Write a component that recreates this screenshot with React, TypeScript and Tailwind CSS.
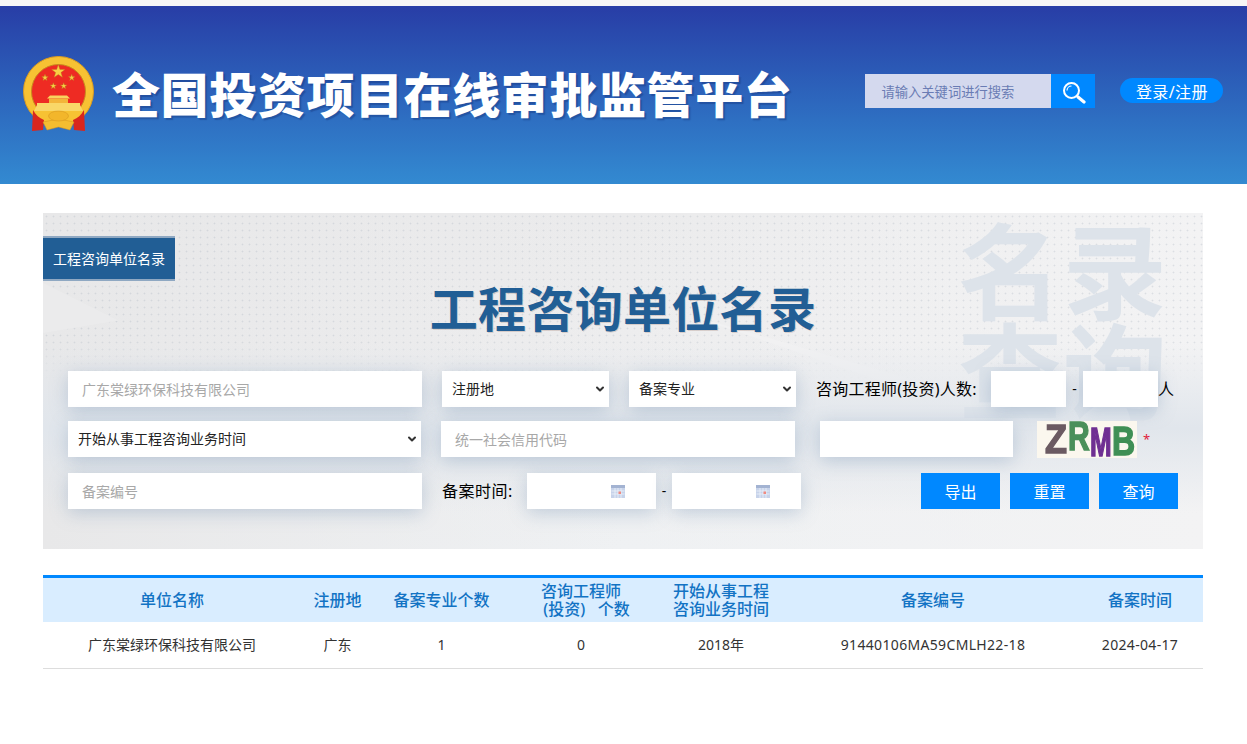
import React from 'react';
import { ChevronDown } from 'lucide-react';

const FONT = "font-['Noto_Sans','Noto_Sans_CJK_SC',sans-serif]";

const columns = [
  { label: <>单位名称</>, value: '广东棠绿环保科技有限公司', cell: '' },
  { label: <>注册地</>, value: '广东', cell: '' },
  { label: <>备案专业个数</>, value: '1', cell: '' },
  { label: <>咨询工程师<br /><span className="ml-[11px]">(投资) &nbsp;&nbsp;个数</span></>, value: '0', cell: '' },
  { label: <>开始从事工程<br />咨询业务时间</>, value: '2018年', cell: '' },
  { label: <>备案编号</>, value: '91440106MA59CMLH22-18', cell: 'tracking-[0.33px]' },
  { label: <>备案时间</>, value: '2024-04-17', cell: 'tracking-[0.33px]' },
];

const GRID = 'grid grid-cols-[258px_73px_135px_144px_136px_288px_126px]';
const BOX = 'h-9 bg-white shadow-[0_4px_18px_rgba(110,140,175,0.35)]';

function star(cx: number, cy: number, r: number) {
  const pts: string[] = [];
  for (let i = 0; i < 10; i++) {
    const rad = i % 2 === 0 ? r : r * 0.4;
    const a = -Math.PI / 2 + (i * Math.PI) / 5;
    pts.push(`${cx + rad * Math.cos(a)},${cy + rad * Math.sin(a)}`);
  }
  return <polygon points={pts.join(' ')} fill="#f9cf45" stroke="#b9801c" strokeWidth="0.4" />;
}

function Emblem() {
  return (
    <svg width="74" height="76" viewBox="0 0 74 76" className="shrink-0">
      <circle cx="36.5" cy="35.5" r="35" fill="#f7c233" stroke="#dd9c20" strokeWidth="1" />
      <circle cx="36.5" cy="35.5" r="27" fill="#ee2b23" stroke="#c98a1e" strokeWidth="1" />
      {star(36.3, 15.7, 7)}
      {star(23, 21.7, 3.4)}
      {star(49.7, 21.7, 3.4)}
      {star(31.3, 30, 3.3)}
      {star(41.7, 30, 3.3)}
      {/* gate */}
      <path d="M28 39.5h17l3 3H25z" fill="#f9d45e" />
      <rect x="27" y="42.5" width="19" height="4.500" fill="#f3b53a" />
      <path d="M15 47h43v2l3 6H12l3-6z" fill="#f9d768" />
      <path d="M12 55h49c-5 6-14 9.500-24.500 9.500S17 61 12 55z" fill="#f7c233" />
      {/* lower swag and cog */}
      <path d="M11 54c3 5 6 8 11 10l-1 10-11 1z" fill="#d9261d" />
      <path d="M62 54c-3 5-6 8-11 10l1 10 11 1z" fill="#d9261d" />
      <path d="M21 66l15.500-3 15.500 3-4 8-11.500-3-11.500 3z" fill="#f4bd30" stroke="#d3921f" strokeWidth="0.5" />
      <ellipse cx="36.500" cy="60" rx="10" ry="5" fill="#f2b62b" stroke="#d3921f" strokeWidth="0.5" />
    </svg>
  );
}

function SearchGlyph() {
  return (
    <svg width="26" height="26" viewBox="0 0 26 26" fill="none" stroke="white">
      <circle cx="11.500" cy="12.500" r="7.500" strokeWidth="2" />
      <path d="M7 12.500a4.500 4.500 0 0 1 4.500-4.500" strokeWidth="1.200" />
      <path d="M18 19l6 5" strokeWidth="3.200" strokeLinecap="round" />
    </svg>
  );
}

function CalendarGlyph() {
  return (
    <svg width="14" height="13" viewBox="0 0 14 13">
      <rect x="0" y="0" width="14" height="13" fill="#c7d3ea" />
      <rect x="0" y="0" width="14" height="3" fill="#a3b3d2" />
      <path d="M0.500 6h13M0.500 9h13M4 3v10M7 3v10M10 3v10" stroke="#eef2fa" strokeWidth="0.800" />
      <rect x="7.500" y="6.500" width="2.500" height="2.500" fill="#f08a80" />
    </svg>
  );
}

function TextBox({ width, placeholder }: { width: string; placeholder?: string }) {
  return (
    <div className={`${BOX} ${width} flex items-center px-3.5 pt-[2px] text-sm text-[#a8a8a8]`}>{placeholder}</div>
  );
}

function SelectBox({ width, label }: { width: string; label: string }) {
  return (
    <div className={`${BOX} ${width} flex items-center justify-between pl-2.5 pr-[3px] text-sm text-[#222]`}>
      <span>{label}</span>
      <ChevronDown size={12} strokeWidth={4} className="text-[#333]" />
    </div>
  );
}

function DateBox() {
  return (
    <div className={`${BOX} flex w-[129px] items-center justify-end pr-[31px]`}>
      <CalendarGlyph />
    </div>
  );
}

function ActionButton({ label }: { label: string }) {
  return (
    <div className="flex h-9 w-[79px] items-center justify-center bg-[#0088ff] pt-[2px] text-base text-white">{label}</div>
  );
}

function Captcha() {
  return (
    <div className="ml-6 flex h-[37px] w-[100px] items-center bg-[#fbf7ee] pl-[8px] font-['Liberation_Sans',sans-serif] text-[40px] leading-[37px] font-bold blur-[0.4px] [-webkit-text-stroke:1.5px_currentColor]">
      <span className="inline-block w-[23px] origin-left scale-x-90 text-[#6b5a62]">Z</span>
      <span className="inline-block w-[22px] origin-left -translate-y-[3px] scale-x-75 text-[#4a8f5a]">R</span>
      <span className="inline-block w-[22px] origin-left translate-y-[3px] scale-x-[0.65] text-[#6f2f92]">M</span>
      <span className="inline-block w-[23px] origin-left translate-y-[2px] scale-x-[0.8] text-[#3f8f55]">B</span>
    </div>
  );
}

export default function App() {
  return (
    <div className={`${FONT} min-h-[744px] bg-white`}>
      {/* Header */}
      <div className="h-1.5 bg-[#f6f6f6]" />
      <header className="flex h-[178px] items-center bg-linear-to-b from-[#283da6] to-[#338ad1]">
        <div className="mt-[-3px] ml-[22px]"><Emblem /></div>
        <h1 className="ml-[16px] text-[48px] leading-none font-black tracking-[0.6px] whitespace-nowrap text-white [text-shadow:2px_2px_1px_rgba(20,50,120,0.4)]">
          全国投资项目在线审批监管平台
        </h1>
        <div className="mt-[-8px] ml-[73px] flex h-[34px]">
          <div className="flex w-[186px] items-center bg-[#d4d9ee] pt-[3px] pl-4 text-[13.3px] text-[#6a7cb4]">请输入关键词进行搜索</div>
          <div className="flex w-11 items-center justify-center bg-[#0088ff]"><SearchGlyph /></div>
        </div>
        <div className="mt-[-10px] ml-[25px] flex h-[25px] w-[103px] items-center justify-center rounded-full bg-[#0088ff] pt-[3px] text-base tracking-[0.4px] text-white">
          登录/注册
        </div>
      </header>

      {/* Search panel */}
      <section className="relative mt-[29px] ml-[43px] h-[336px] w-[1160px] overflow-hidden bg-linear-to-b from-[#ebebec] via-[#eeeeef] to-[#eff1f3]">
        <div className="absolute inset-0 bg-linear-to-r from-[#e8e8e9] via-transparent to-[#f3f3f4]" />
        <div className="absolute inset-x-0 top-0 h-[170px] bg-[radial-gradient(circle,rgba(165,175,190,0.3)_0.8px,transparent_1.1px)] bg-size-[7px_7px] [mask-image:linear-gradient(to_bottom,black_75%,transparent)]" />
        <div className="absolute top-[70px] left-0 h-[50px] w-[75px] bg-[#ebebec] [clip-path:polygon(0_0,100%_75%,0_100%)]" />
        <div className="absolute top-[100px] left-[640px] h-[70px] w-[240px] bg-[#f1f1f2] [clip-path:polygon(0_0,100%_100%,85%_100%)]" />
        <div className="absolute top-[130px] left-0 h-[170px] w-full bg-linear-to-b from-transparent via-[#e1e6ec] to-transparent" />
        <div className="absolute top-[9px] left-[915px] w-[225px] text-[104px] leading-[100px] font-bold tracking-[1px] text-[#dde3ea]">
          名录<br />查询
        </div>

        <div className="relative">
          <div className="mt-[23px] flex h-[45px] w-[132px] items-center justify-center border-y-2 border-[#8fa8c2] bg-[#215e95] text-sm text-white">
            工程咨询单位名录
          </div>
          <h2 className="text-center text-[48px] leading-[56px] font-bold tracking-[0.3px] text-[#215e95] [text-shadow:1px_1px_0_rgba(120,70,50,0.2)]">
            工程咨询单位名录
          </h2>

          <div className="mt-[34px] flex flex-col pl-[25px] text-black">
            <div className="flex items-center">
              <TextBox width="w-[354px]" placeholder="广东棠绿环保科技有限公司" />
              <div className="ml-5"><SelectBox width="w-[167px]" label="注册地" /></div>
              <div className="ml-5"><SelectBox width="w-[167px]" label="备案专业" /></div>
              <span className="ml-5 w-[175px] text-base tracking-[0.25px] whitespace-nowrap">咨询工程师(投资)人数:</span>
              <TextBox width="w-[75px]" />
              <span className="w-[17px] text-center text-sm">-</span>
              <TextBox width="w-[75px]" />
              <span className="text-base">人</span>
            </div>

            <div className="mt-[14px] flex items-start">
              <SelectBox width="w-[353px]" label="开始从事工程咨询业务时间" />
              <div className="ml-5"><TextBox width="w-[354px]" placeholder="统一社会信用代码" /></div>
              <div className="ml-[25px]"><TextBox width="w-[193px]" /></div>
              <Captcha />
              <span className="ml-[6px] self-center text-[13px] text-[#e0203a]">*</span>
            </div>

            <div className="mt-[15px] flex items-center">
              <TextBox width="w-[354px]" placeholder="备案编号" />
              <span className="ml-5 w-[85px] text-base tracking-[0.5px]">备案时间:</span>
              <DateBox />
              <span className="w-4 text-center text-sm">-</span>
              <DateBox />
              <div className="ml-[120px] flex gap-2.5">
                <ActionButton label="导出" />
                <ActionButton label="重置" />
                <ActionButton label="查询" />
              </div>
            </div>
          </div>
        </div>
      </section>

      {/* Results */}
      <section className="mt-[26px] ml-[43px] w-[1160px]">
        <div className={`${GRID} h-[47px] border-t-[3px] border-[#0088ff] bg-[#d9edff] text-center text-base leading-[18px] font-medium text-[#1273c4]`}>
          {columns.map((col, i) => (
            <div key={i} className="flex items-center justify-center">
              <div>{col.label}</div>
            </div>
          ))}
        </div>
        <div className={`${GRID} h-[47px] border-b border-[#ddd] text-center text-sm text-[#333]`}>
          {columns.map((col, i) => (
            <div key={i} className={`flex items-center justify-center ${col.cell}`}>{col.value}</div>
          ))}
        </div>
      </section>
    </div>
  );
}
